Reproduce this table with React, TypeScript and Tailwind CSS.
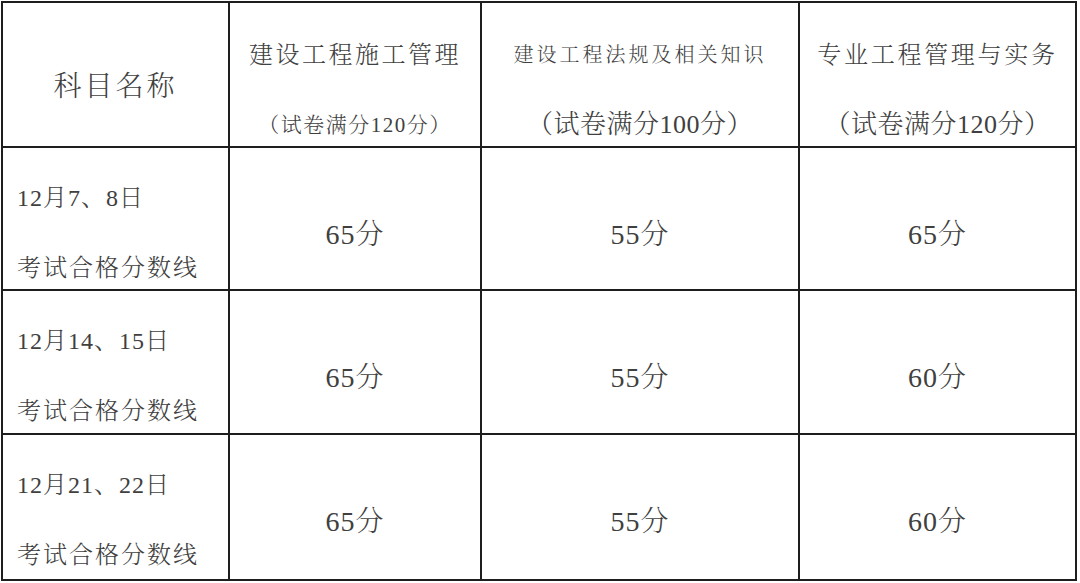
import React from "react";

const ff = "font-['Liberation_Serif','Noto_Serif_CJK_SC',serif]";

function Label({ a }: { a: string }) {
  return (
    <div className={`${ff} bg-white pl-[14px] pt-[30px] text-[24px] leading-[40px] tracking-[2px] text-[#404040] font-light`}>
      <div className="tracking-[1px]">{a}</div>
      <div className="mt-[30px]">考试合格分数线</div>
    </div>
  );
}

function Val({ v }: { v: string }) {
  return (
    <div className={`${ff} bg-white pt-[67px] text-center text-[28px] leading-[40px] tracking-[1px] text-[#404040] font-light`}>
      {v}
    </div>
  );
}

export default function App() {
  const rows = [
    { a: "12月7、8日", v: ["65分", "55分", "65分"] },
    { a: "12月14、15日", v: ["65分", "55分", "60分"] },
    { a: "12月21、22日", v: ["65分", "55分", "60分"] },
  ];
  return (
    <div className={`${ff} w-[1080px] h-[583px] bg-white overflow-hidden`}>
      <div className="ml-[1px] mt-[1px] w-[1076px] p-[2px] bg-[#1e1e1e] grid grid-cols-[225px_250px_316px_275px] grid-rows-[143px_141px_142px_144px] gap-[2px]">
        <div className={`${ff} bg-white pt-[64px] text-center text-[28px] leading-[40px] tracking-[3px] text-[#404040] font-light`}>
          科目名称
        </div>
        <div className={`${ff} bg-white pt-[32px] text-center text-[#404040] font-light`}>
          <div className="text-[24px] leading-[40px] tracking-[2.5px]">建设工程施工管理</div>
          <div className="mt-[30px] text-[21px] leading-[40px] tracking-[1.5px]">（试卷满分120分）</div>
        </div>
        <div className={`${ff} bg-white pt-[32px] text-center text-[#404040] font-light`}>
          <div className="text-[20px] leading-[40px] tracking-[3px]">建设工程法规及相关知识</div>
          <div className="mt-[30px] text-[26px] leading-[40px] tracking-[0.5px]">（试卷满分100分）</div>
        </div>
        <div className={`${ff} bg-white pt-[32px] text-center text-[#404040] font-light`}>
          <div className="text-[24px] leading-[40px] tracking-[2.7px]">专业工程管理与实务</div>
          <div className="mt-[30px] text-[26px] leading-[40px] tracking-[0.5px]">（试卷满分120分）</div>
        </div>
        {rows.map((r) => (
          <React.Fragment key={r.a}>
            <Label a={r.a} />
            {r.v.map((v, i) => (
              <Val key={i} v={v} />
            ))}
          </React.Fragment>
        ))}
      </div>
    </div>
  );
}
